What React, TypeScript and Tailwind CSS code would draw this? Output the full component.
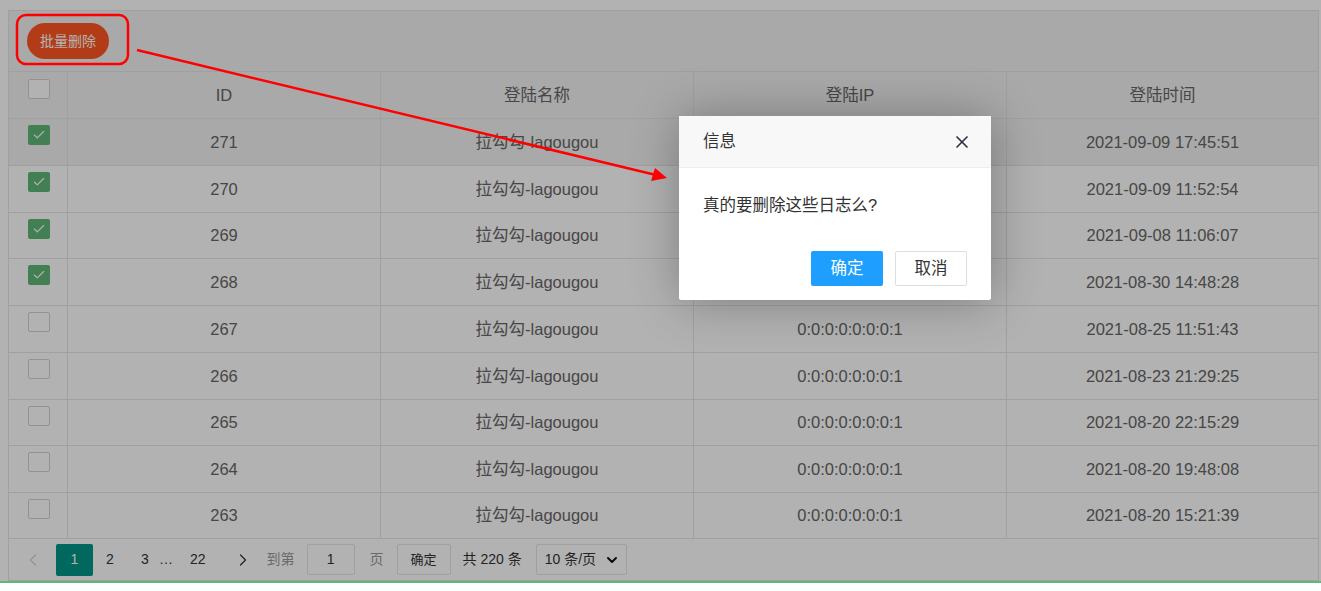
import { X, ChevronLeft, ChevronRight, ChevronDown, Check } from "lucide-react";

const rows = [
  { id: 271, ip: "0:0:0:0:0:0:0:1", time: "2021-09-09 17:45:51", checked: true, h: "h-[47px]", hover: true },
  { id: 270, ip: "0:0:0:0:0:0:0:1", time: "2021-09-09 11:52:54", checked: true, h: "h-[47px]" },
  { id: 269, ip: "0:0:0:0:0:0:0:1", time: "2021-09-08 11:06:07", checked: true, h: "h-[46px]" },
  { id: 268, ip: "0:0:0:0:0:0:0:1", time: "2021-08-30 14:48:28", checked: true, h: "h-[47px]" },
  { id: 267, ip: "0:0:0:0:0:0:0:1", time: "2021-08-25 11:51:43", checked: false, h: "h-[47px]" },
  { id: 266, ip: "0:0:0:0:0:0:0:1", time: "2021-08-23 21:29:25", checked: false, h: "h-[47px]" },
  { id: 265, ip: "0:0:0:0:0:0:0:1", time: "2021-08-20 22:15:29", checked: false, h: "h-[46px]" },
  { id: 264, ip: "0:0:0:0:0:0:0:1", time: "2021-08-20 19:48:08", checked: false, h: "h-[47px]" },
  { id: 263, ip: "0:0:0:0:0:0:0:1", time: "2021-08-20 15:21:39", checked: false, h: "h-[46px]" },
];

function Box({ checked }: { checked: boolean }) {
  return checked ? (
    <div className="w-[22px] h-[20px] rounded-[2px] bg-[#5fb878] flex items-center justify-center">
      <Check size={14} strokeWidth={2} className="text-white" />
    </div>
  ) : (
    <div className="w-[22px] h-[20px] rounded-[2px] border border-[#d2d2d2] bg-white" />
  );
}

function Row({ r }: { r: (typeof rows)[number] }) {
  return (
    <div className={`flex ${r.h} border-t border-[#e6e6e6] ${r.hover ? "bg-[#f2f2f2]" : "bg-white"}`}>
      <div className="w-[59px] shrink-0 border-r border-[#e6e6e6] pl-[19px] pt-[6px]">
        <Box checked={r.checked} />
      </div>
      <div className="w-[313px] shrink-0 border-r border-[#e6e6e6] flex items-center justify-center">{r.id}</div>
      <div className="w-[313px] shrink-0 border-r border-[#e6e6e6] flex items-center justify-center">拉勾勾-lagougou</div>
      <div className="w-[313px] shrink-0 border-r border-[#e6e6e6] flex items-center justify-center">{r.ip}</div>
      <div className="flex-1 flex items-center justify-center">{r.time}</div>
    </div>
  );
}

export default function App() {
  return (
    <div
      className="w-[1321px] h-[591px] overflow-hidden bg-white text-[#666]"
      style={{ fontFamily: '"Liberation Sans", "Noto Sans CJK SC", sans-serif' }}
    >
      <div className="relative h-[581px] bg-white pt-[10px] pl-[8px] pr-[2px] overflow-hidden">
        {/* table */}
        <div className="border border-[#e6e6e6] text-[16.5px]">
          <div className="h-[60px] bg-[#f2f2f2] flex items-center pl-[18px]">
            <button className="h-[36px] w-[82px] rounded-full bg-[#ff5722] text-white text-[14px]">批量删除</button>
          </div>
          <div className="flex h-[47px] border-t border-[#e6e6e6] bg-[#f2f2f2]">
            <div className="w-[59px] shrink-0 border-r border-[#e6e6e6] pl-[19px] pt-[7px]">
              <Box checked={false} />
            </div>
            <div className="w-[313px] shrink-0 border-r border-[#e6e6e6] flex items-center justify-center">ID</div>
            <div className="w-[313px] shrink-0 border-r border-[#e6e6e6] flex items-center justify-center">登陆名称</div>
            <div className="w-[313px] shrink-0 border-r border-[#e6e6e6] flex items-center justify-center">登陆IP</div>
            <div className="flex-1 flex items-center justify-center">登陆时间</div>
          </div>
          {rows.map((r) => (
            <Row key={r.id} r={r} />
          ))}
          {/* pagination */}
          <div className="h-[42px] border-t border-[#e6e6e6] flex items-center pl-[14px] text-[14px] text-[#333]">
            <ChevronLeft size={20} strokeWidth={1.5} className="text-[#d2d2d2] mr-[13px]" />
            <span className="w-[37px] h-[32px] bg-[#009688] text-white flex items-center justify-center rounded-[2px]">1</span>
            <span className="ml-[13px] w-[8px]">2</span>
            <span className="ml-[27px] w-[8px]">3</span>
            <span className="ml-[10px]">…</span>
            <span className="ml-[17px]">22</span>
            <ChevronRight size={20} strokeWidth={1.5} className="ml-[27px] text-[#333]" />
            <span className="ml-[14px] text-[#999]">到第</span>
            <span className="ml-[12px] w-[48px] h-[31px] border border-[#e6e6e6] rounded-[2px] bg-white flex items-center justify-center">1</span>
            <span className="ml-[15px] text-[#999]">页</span>
            <span className="ml-[13px] w-[54px] h-[31px] border border-[#e6e6e6] rounded-[2px] bg-white flex items-center justify-center text-[13px]">确定</span>
            <span className="ml-[12px]">共 220 条</span>
            <span className="ml-[14px] w-[91px] h-[31px] border border-[#e6e6e6] rounded-[2px] bg-white flex items-center pl-[8px] gap-[8px]">
              10 条/页
              <ChevronDown size={16} strokeWidth={3} className="text-[#111]" />
            </span>
          </div>
        </div>

        {/* shade */}
        <div className="absolute inset-0 bg-black/30" />

        {/* dialog */}
        <div className="absolute left-[679px] top-[116px] w-[312px] h-[184px] bg-white rounded-[2px] shadow-[1px_1px_50px_rgba(0,0,0,0.3)]">
          <div className="h-[52px] bg-[#f8f8f8] border-b border-[#eee] flex items-center justify-between pl-[24px] pr-[19px] text-[16.5px] text-[#333]">
            <span>信息</span>
            <X size={20} strokeWidth={2} className="text-[#2f2f3f]" />
          </div>
          <div className="pl-[24px] pt-[25px] text-[16.5px] text-[#333]">真的要删除这些日志么?</div>
          <div className="flex justify-end gap-[12px] pr-[24px] mt-[33px] text-[16.5px]">
            <span className="w-[72px] h-[35px] bg-[#1e9fff] text-white rounded-[2px] flex items-center justify-center">确定</span>
            <span className="w-[72px] h-[35px] border border-[#dedede] text-[#333] rounded-[2px] flex items-center justify-center">取消</span>
          </div>
        </div>

        {/* annotation */}
        <svg className="absolute inset-0 pointer-events-none" width="1321" height="581">
          <rect x="17" y="15" width="111" height="49" rx="9" fill="none" stroke="#ff0000" strokeWidth="2.5" />
          <line x1="137" y1="50" x2="656" y2="175" stroke="#ff0000" strokeWidth="2.5" />
          <polygon points="667,178 655,168 651,181" fill="#ff0000" />
        </svg>
      </div>
      <div className="h-[2px] bg-[#5fb878]" />
    </div>
  );
}
